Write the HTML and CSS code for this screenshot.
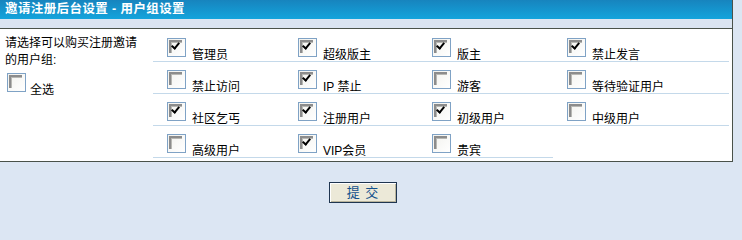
FILE: index.html
```html
<!DOCTYPE html>
<html lang="zh-CN">
<head>
<meta charset="utf-8">
<title>用户组设置</title>
<link rel="stylesheet" href="styles.css">
</head>
<body>
<div class="panel">
  <div class="title">邀请注册后台设置 - 用户组设置</div>
  <div class="strip"></div>
  <div class="content">
    <div class="side">
      <div class="prompt">请选择可以购买注册邀请的用户组:</div>
      <div class="all"><span class="cb"></span><span class="all-label">全选</span></div>
    </div>
    <div class="grid">
      <div class="cell"><span class="cb on"></span><span class="lbl">管理员</span></div>
      <div class="cell"><span class="cb on"></span><span class="lbl">超级版主</span></div>
      <div class="cell"><span class="cb on"></span><span class="lbl">版主</span></div>
      <div class="cell"><span class="cb on"></span><span class="lbl">禁止发言</span></div>
      <div class="cell"><span class="cb"></span><span class="lbl">禁止访问</span></div>
      <div class="cell"><span class="cb on"></span><span class="lbl">IP 禁止</span></div>
      <div class="cell"><span class="cb"></span><span class="lbl">游客</span></div>
      <div class="cell"><span class="cb"></span><span class="lbl">等待验证用户</span></div>
      <div class="cell"><span class="cb on"></span><span class="lbl">社区乞丐</span></div>
      <div class="cell"><span class="cb on"></span><span class="lbl">注册用户</span></div>
      <div class="cell"><span class="cb on"></span><span class="lbl">初级用户</span></div>
      <div class="cell"><span class="cb"></span><span class="lbl">中级用户</span></div>
      <div class="cell"><span class="cb"></span><span class="lbl">高级用户</span></div>
      <div class="cell"><span class="cb on"></span><span class="lbl">VIP会员</span></div>
      <div class="cell"><span class="cb"></span><span class="lbl">贵宾</span></div>
    </div>
  </div>
</div>
<div class="actions"><button class="submit" type="button">提 交</button></div>
</body>
</html>
```

FILE: styles.css
```css
html, body {
  margin: 0;
  padding: 0;
}
body {
  background: #dce6f3;
  font-family: "Liberation Sans", "Noto Sans CJK SC", sans-serif;
  font-size: 12px;
  color: #000;
}
.panel {
  width: 732px;
  border-right: 1px solid #4a524a;
}
.title {
  height: 19px;
  line-height: 18px;
  padding-left: 5px;
  background: linear-gradient(#1784be, #13a4dc);
  color: #fff;
  font-weight: bold;
  font-size: 12.5px;
  letter-spacing: 0.4px;
  white-space: nowrap;
}
.strip {
  height: 9px;
  background: #dae4f1;
}
.content {
  display: flex;
  background: #fff;
  border-top: 1px solid #4a524a;
  border-bottom: 1px solid #4a524a;
  height: 132px;
}
.side {
  width: 138px;
  padding: 6px 10px 0 5px;
}
.prompt {
  line-height: 17px;
}
.all {
  display: flex;
  align-items: flex-end;
  margin: 4px 0 0 2px;
}
.all-label {
  margin: 0 0 -5px 4px;
  line-height: 14px;
}
.grid {
  display: grid;
  grid-template-columns: 131px 134px 135px 176px;
  grid-auto-rows: 32px;
  align-content: start;
  padding-top: 1px;
}
.cell {
  display: flex;
  align-items: flex-start;
  padding-left: 14px;
  border-bottom: 1px solid #c4d9ea;
  box-sizing: border-box;
}
.lbl {
  margin: 18px 0 0 6px;
  line-height: 14px;
  white-space: nowrap;
}
.cb {
  position: relative;
  flex: none;
  width: 19px;
  height: 19px;
  box-sizing: border-box;
  border: 1px solid #7fa2c5;
  background: linear-gradient(135deg, #f2f2ee, #ffffff);
  margin-top: 8px;
}
.all .cb {
  margin-top: 0;
}
.cb::before {
  content: "";
  position: absolute;
  left: 1px;
  top: 1px;
  width: 11px;
  height: 11px;
  border-top: 2px solid #8c8c8c;
  border-left: 2px solid #8c8c8c;
  box-shadow: inset 1px 1px 0 #b8b8b4;
}
.cb.on::after {
  content: "";
  position: absolute;
  left: 5px;
  top: 2px;
  width: 3px;
  height: 6px;
  border-right: 2px solid #000;
  border-bottom: 2px solid #000;
  transform: rotate(40deg);
}
.actions {
  padding: 20px 0 0 329px;
}
.submit {
  width: 68px;
  height: 21px;
  padding: 0;
  margin: 0;
  border: 1px solid #1f3550;
  box-shadow: inset 1px 1px 0 #ffffff, inset -1px -1px 0 #b9b49c;
  background: #ece9d8;
  color: #12508c;
  font-family: "Liberation Sans", "Noto Sans CJK SC", sans-serif;
  font-size: 13px;
  line-height: 19px;
  letter-spacing: 1px;
}
```
